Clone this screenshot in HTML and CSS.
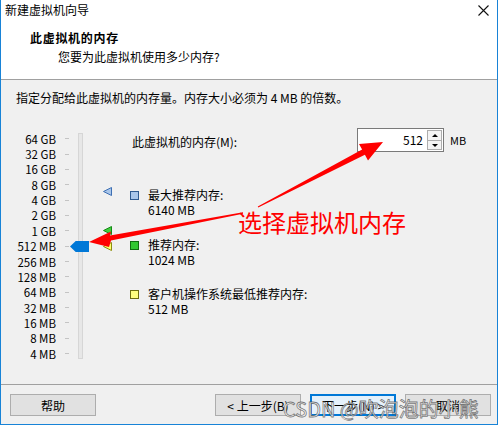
FILE: index.html
```html
<!DOCTYPE html>
<html lang="zh-CN">
<head>
    <meta charset="UTF-8">
    <title>新建虚拟机向导</title>
    <link rel="stylesheet" href="styles.css">
</head>
<body>
<div class="dialog">
    <div class="titlebar">
        <span class="title">新建虚拟机向导</span>
        <svg class="close" width="11" height="11" viewBox="0 0 11 11">
            <path d="M0.5 0.5 L10.5 10.5 M10.5 0.5 L0.5 10.5" stroke="#111" stroke-width="1.1" fill="none"/>
        </svg>
    </div>
    <div class="header">
        <h1>此虚拟机的内存</h1>
        <p>您要为此虚拟机使用多少内存?</p>
    </div>
    <div class="content">
        <p class="intro">指定分配给此虚拟机的内存量。内存大小必须为 4 MB 的倍数。</p>
        <div class="main">
            <div class="scale">
                <ul class="labels">
                    <li><span>64 GB</span><i></i></li>
                    <li><span>32 GB</span><i></i></li>
                    <li><span>16 GB</span><i></i></li>
                    <li><span>8 GB</span><i></i></li>
                    <li><span>4 GB</span><i></i></li>
                    <li><span>2 GB</span><i></i></li>
                    <li><span>1 GB</span><i></i></li>
                    <li><span>512 MB</span><i></i></li>
                    <li><span>256 MB</span><i></i></li>
                    <li><span>128 MB</span><i></i></li>
                    <li><span>64 MB</span><i></i></li>
                    <li><span>32 MB</span><i></i></li>
                    <li><span>16 MB</span><i></i></li>
                    <li><span>8 MB</span><i></i></li>
                    <li><span>4 MB</span><i></i></li>
                </ul>
                <div class="track"></div>
                <div class="thumb"></div>
                <!-- 标记: 最大推荐 / 推荐 / 最低 -->
                <svg class="mark mark-max" width="9" height="9" viewBox="0 0 9 9">
                    <polygon points="0.5,4.5 8.5,0.5 8.5,8.5" fill="#a9c6ea" stroke="#3d6fb3"/>
                </svg>
                <svg class="mark mark-rec" width="9" height="9" viewBox="0 0 9 9">
                    <polygon points="0.5,4.5 8.5,0.5 8.5,8.5" fill="#3fcf3f" stroke="#168a16"/>
                </svg>
                <svg class="mark mark-min" width="9" height="9" viewBox="0 0 9 9">
                    <polygon points="0.5,4.5 8.5,0.5 8.5,8.5" fill="#ffff70" stroke="#8c8c10"/>
                </svg>
            </div>
            <div class="panel">
                <div class="mem-row">
                    <label>此虚拟机的内存(M):</label>
                    <div class="spin">
                        <span class="value">512</span>
                        <span class="btns">
                            <b class="up"></b>
                            <b class="down"></b>
                        </span>
                    </div>
                    <span class="unit">MB</span>
                </div>
                <div class="legend">
                    <div class="item">
                        <i class="sq sq-max"></i>
                        <div>最大推荐内存:<br>6140 MB</div>
                    </div>
                    <div class="item">
                        <i class="sq sq-rec"></i>
                        <div>推荐内存:<br>1024 MB</div>
                    </div>
                    <div class="item">
                        <i class="sq sq-min"></i>
                        <div>客户机操作系统最低推荐内存:<br>512 MB</div>
                    </div>
                </div>
            </div>
        </div>
    </div>
    <div class="footer">
        <button>帮助</button>
        <span class="spacer"></span>
        <button>&lt; 上一步(B)</button>
        <button class="default">下一步(N) &gt;</button>
        <button>取消</button>
    </div>
</div>

<!-- 红色标注 -->
<svg class="notes" width="504" height="429" viewBox="0 0 504 429">
    <polygon fill="#ff0000" points="258.2,207.4 364.9,154.8 368,160.5 383,142 359,144 362.1,149.4 257.8,206.6"/>
    <polygon fill="#ff0000" points="243,213.8 111,240.5 109,247 89,242 111,231.5 110,235.5 243,212.2"/>
</svg>
<div class="callout">选择虚拟机内存</div>
<div class="watermark">CSDN @吹泡泡的小熊</div>
</body>
</html>
```

FILE: styles.css
```css
* {
    margin: 0;
    padding: 0;
}

body {
    width: 504px;
    height: 429px;
    background: #fff;
    font-family: "Noto Sans CJK SC", "Liberation Sans", sans-serif;
    font-size: 12px;
    color: #000;
    position: relative;
    overflow: hidden;
}

.dialog {
    width: 496px;
    height: 424px;
    border: 1px solid #1883d7;
    border-top: none;
    display: flex;
    flex-direction: column;
}

.titlebar {
    height: 21px;
    display: flex;
    align-items: center;
    padding: 0 8px 0 4px;
    background: #fff;
}

.titlebar .title {
    flex: 1;
    line-height: 16px;
    padding-bottom: 1px;
}

.header {
    height: 49px;
    background: #fff;
    border-bottom: 1px solid #a0a0a0;
    padding-top: 9px;
}

.header h1 {
    font-size: 12px;
    font-weight: bold;
    letter-spacing: 0.7px;
    line-height: 16px;
    margin-left: 29px;
}

.header p {
    line-height: 16px;
    margin: 3px 0 0 57px;
}

.content {
    height: 304px;
    background: #f0f0f0;
    padding-top: 10px;
    box-sizing: border-box;
}

.intro {
    line-height: 16px;
    margin-left: 15px;
}

.main {
    display: flex;
    margin-top: 20px;
}

.scale {
    position: relative;
    width: 120px;
    padding-left: 9px;
    display: flex;
    align-items: flex-start;
}

.labels {
    list-style: none;
    padding-top: 5px;
}

.labels li {
    height: 15.36px;
    display: flex;
    align-items: center;
    font-size: 11.5px;
    color: #000;
}

.labels li span {
    width: 46px;
    text-align: right;
    line-height: 14px;
}

.labels li i {
    width: 4px;
    height: 1px;
    margin-left: 9px;
    background: #c4c4c4;
}

.track {
    width: 3px;
    height: 224px;
    margin: 7px 0 0 9px;
    background: #e7e7e7;
    border: 1px solid #d6d6d6;
}

.thumb {
    position: absolute;
    left: 69px;
    top: 115px;
    width: 19px;
    height: 11px;
    background: #0078d7;
    clip-path: polygon(0 50%, 30% 0, 100% 0, 100% 100%, 30% 100%);
}

.mark {
    position: absolute;
    left: 102px;
}

.mark-max {
    top: 61px;
}

.mark-rec {
    top: 100px;
}

.mark-min {
    top: 116px;
}

.panel {
    flex: 1;
}

.mem-row {
    display: flex;
    align-items: center;
    height: 24px;
    margin-top: 2px;
    padding-left: 2px;
}

.mem-row label {
    width: 225px;
    padding-top: 2px;
}

.spin {
    width: 85px;
    height: 22px;
    border: 1px solid #7a7a7a;
    background: #fff;
    display: flex;
}

.spin .value {
    flex: 1;
    text-align: right;
    line-height: 22px;
    padding-right: 4px;
    font-size: 12px;
}

.spin .btns {
    width: 15px;
    margin: 1px 1px 1px 0;
    display: flex;
    flex-direction: column;
}

.spin .btns b {
    flex: 1;
    border: 1px solid #adadad;
    background: #f4f4f4;
    position: relative;
}

.spin .btns b + b {
    border-top: none;
}

.spin .btns b::after {
    content: "";
    position: absolute;
    left: 4px;
    top: 3px;
    border-left: 3px solid transparent;
    border-right: 3px solid transparent;
}

.spin .up::after {
    border-bottom: 3px solid #000;
}

.spin .down::after {
    border-top: 3px solid #000;
}

.unit {
    margin-left: 6px;
    font-size: 11px;
}

.legend {
    margin-top: 35px;
}

.item {
    display: flex;
    align-items: flex-start;
    line-height: 15px;
    margin-bottom: 19.5px;
}

.sq {
    width: 7px;
    height: 7px;
    margin: 4px 9px 0 0;
    border: 1px solid #555;
}

.sq-max {
    background: #a9c6ea;
    border-color: #2f5a90;
}

.sq-rec {
    background: #32c832;
    border-color: #116e11;
}

.sq-min {
    background: #ffff80;
    border-color: #6e6e10;
}

.footer {
    flex: 1;
    border-top: 1px solid #a0a0a0;
    background: #f0f0f0;
    display: flex;
    align-items: flex-start;
    gap: 9px;
    padding: 9px 6px 0 9px;
}

.footer .spacer {
    flex: 1;
}

button {
    width: 86px;
    height: 22px;
    border: 1px solid #adadad;
    background: #e1e1e1;
    font-family: "Noto Sans CJK SC", "Liberation Sans", sans-serif;
    font-size: 12px;
    color: #000;
}

button.default {
    border: 2px solid #0078d7;
    background: #e5f1fb;
}

.notes {
    position: absolute;
    left: 0;
    top: 0;
    pointer-events: none;
}

.callout {
    position: absolute;
    left: 238px;
    top: 206px;
    font-size: 24px;
    line-height: 32px;
    color: #ff0000;
}

.watermark {
    position: absolute;
    left: 283px;
    top: 395px;
    font-size: 20px;
    line-height: 28px;
    color: rgba(255, 255, 255, 0.8);
    -webkit-text-stroke: 0.8px rgba(80, 80, 80, 0.75);
}
```
